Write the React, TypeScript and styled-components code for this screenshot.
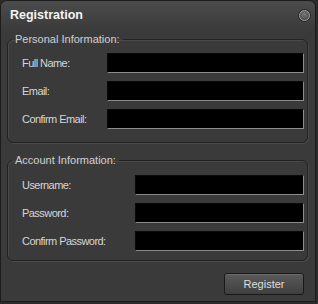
import React from 'react';
import styled, { createGlobalStyle } from 'styled-components';

const GlobalStyle = createGlobalStyle`
  html, body {
    margin: 0;
    padding: 0;
    background: #2b2b2b;
  }
`;

const Window = styled.div`
  width: 314px;
  height: 300px;
  border: 1px solid #1c1c1c;
  border-radius: 7px 7px 0 0;
  background: #3a3a3a;
  font-family: 'Liberation Sans', Arial, sans-serif;
  display: flex;
  flex-direction: column;
  overflow: hidden;
`;

const TitleBar = styled.div`
  height: 30px;
  flex: none;
  display: flex;
  align-items: center;
  justify-content: space-between;
  padding: 0 5px 2px 9px;
  box-sizing: border-box;
  background: linear-gradient(#4c4c4c, #3a3a3a);
`;

const Title = styled.span`
  color: #f4f4f4;
  font-weight: bold;
  font-size: 12.5px;
`;

const CloseDot = styled.span`
  width: 9px;
  height: 9px;
  border-radius: 50%;
  border: 1px solid #9a9a9a;
  background: radial-gradient(circle at 50% 35%, #7a7a7a, #3e3e3e);
  box-shadow: 0 0 0 1px #2a2a2a;
`;

const Body = styled.div`
  padding: 0 7px 0 6px;
  display: flex;
  flex-direction: column;
`;

const Group = styled.fieldset<{ $top: number; $padTop: number; $padBottom: number }>`
  margin: ${(p) => p.$top}px 0 0 0;
  padding: ${(p) => p.$padTop}px 3px ${(p) => p.$padBottom}px 14px;
  border: 1px solid #222;
  border-radius: 6px;
  box-shadow: inset 1px 1px 0 #4a4a4a, 1px 1px 0 #4a4a4a;
  display: flex;
  flex-direction: column;
  gap: 8px;
  min-width: 0;
`;

const Legend = styled.legend`
  color: #cfcfcf;
  font-size: 11px;
  line-height: 13px;
  padding: 0 3px;
  margin-left: -10px;
`;

const Row = styled.div<{ $labelWidth: number }>`
  display: grid;
  grid-template-columns: ${(p) => p.$labelWidth}px minmax(0, 1fr);
  align-items: center;
`;

const Label = styled.label`
  color: #d6d6d6;
  font-size: 11px;
  letter-spacing: -0.55px;
`;

const Input = styled.input`
  width: 100%;
  min-width: 0;
  height: 20px;
  box-sizing: border-box;
  margin: 0;
  background: #000;
  border: 1px solid;
  border-color: #0a0a0a #8c8c8c #8c8c8c #0a0a0a;
  outline: none;
  color: #eee;
`;

const Footer = styled.div`
  display: flex;
  justify-content: flex-end;
  padding: 12px 4px 0 0;
`;

const Button = styled.button`
  width: 80px;
  height: 22px;
  border: 1px solid #1a1a1a;
  border-radius: 3px;
  background: linear-gradient(#5a5a5a, #3f3f3f);
  box-shadow: inset 0 1px 0 #6a6a6a;
  color: #dedede;
  font-family: 'Liberation Sans', Arial, sans-serif;
  font-size: 11px;
  padding: 0;
`;

const personal = ['Full Name:', 'Email:', 'Confirm Email:'];
const account = ['Username:', 'Password:', 'Confirm Password:'];

export default function App() {
  return (
    <>
      <GlobalStyle />
      <Window>
        <TitleBar>
          <Title>Registration</Title>
          <CloseDot />
        </TitleBar>
        <Body>
          <Group $top={2} $padTop={7} $padBottom={13}>
            <Legend>Personal Information:</Legend>
            {personal.map((l) => (
              <Row key={l} $labelWidth={85}>
                <Label>{l}</Label>
                <Input />
              </Row>
            ))}
          </Group>
          <Group $top={11} $padTop={8} $padBottom={9}>
            <Legend>Account Information:</Legend>
            {account.map((l) => (
              <Row key={l} $labelWidth={113}>
                <Label>{l}</Label>
                <Input />
              </Row>
            ))}
          </Group>
          <Footer>
            <Button>Register</Button>
          </Footer>
        </Body>
      </Window>
    </>
  );
}
